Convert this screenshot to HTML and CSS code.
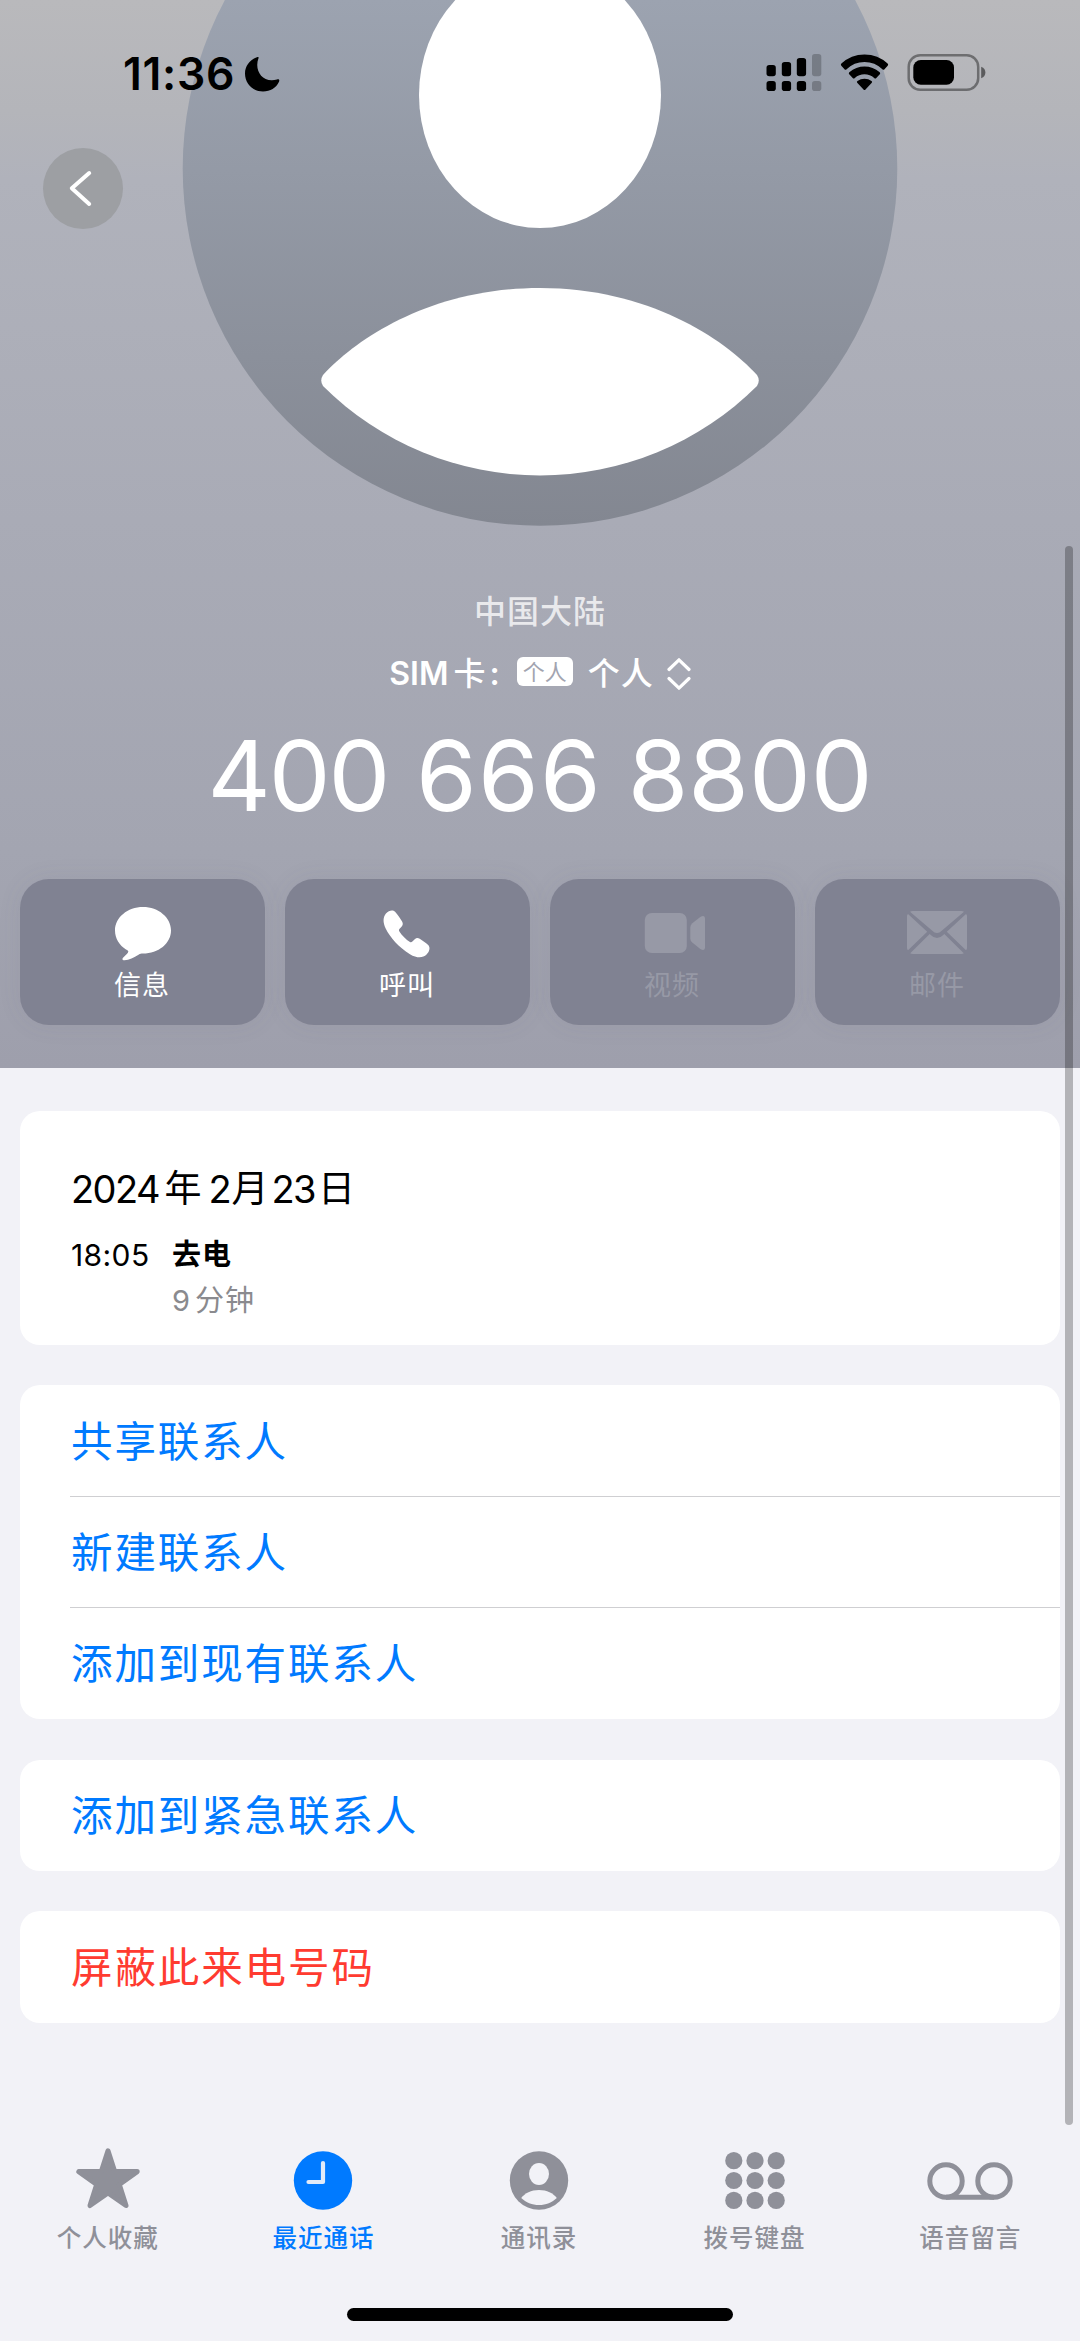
FILE: index.html
```html
<!DOCTYPE html>
<html lang="zh-CN">
<head>
<meta charset="utf-8">
<title>最近通话</title>
<link rel="stylesheet" href="styles.css">
</head>
<body>
<div class="screen">
  <header class="hero">
    <svg class="avatar" viewBox="0 0 1080 526">
      <defs>
        <linearGradient id="disc" gradientUnits="userSpaceOnUse" x1="0" y1="0" x2="0" y2="526">
          <stop offset="0" stop-color="#9ca3b0"/>
          <stop offset="1" stop-color="#838791"/>
        </linearGradient>
      </defs>
      <circle cx="540" cy="168.500" r="357.300" fill="url(#disc)"/>
      <ellipse cx="540" cy="95" rx="121" ry="133" fill="#fff"/>
      <path d="M323 375C357 338 432 288 540 288S723 338 757 375Q760.500 380.500 757 386A308 308 0 0 1 323 386Q319.500 380.500 323 375Z" fill="#fff"/>
    </svg>

    <div class="status">
      <div class="clock">
        <span class="time">11:36</span>
        <svg class="moon" viewBox="0 0 36 36"><path d="M13.500 1C14.500 .7 15 1.300 14.500 2.300C10 14 18 27.500 33 23.500C35 23 35.800 24 35 25.800C32 32 26.500 35.500 19 35.500C9 35.500 1 28 1 17.500C1 10 6 3.500 13.500 1Z"/></svg>
      </div>
      <svg class="indicators" viewBox="766 50 222 44">
        <g>
          <rect x="766.500" y="65" width="9.300" height="11.300" rx="2.800"/>
          <rect x="781.800" y="62" width="9.300" height="14.300" rx="2.800"/>
          <rect x="796.800" y="58" width="9.300" height="18.300" rx="2.800"/>
          <rect x="766.500" y="81" width="9.300" height="10" rx="2.800"/>
          <rect x="781.800" y="81" width="9.300" height="10" rx="2.800"/>
          <rect x="796.800" y="81" width="9.300" height="10" rx="2.800"/>
          <g opacity=".22">
            <rect x="812" y="54" width="9.300" height="22.300" rx="2.800"/>
            <rect x="812" y="81" width="9.300" height="10" rx="2.800"/>
          </g>
        </g>
        <g>
          <path d="M841.300 65.800Q840.300 64.700 841.400 63.600Q851 54.500 864.500 54.500T887.600 63.600Q888.700 64.700 887.700 65.800L884.500 69.300Q883.500 70.300 882.400 69.300Q875 62 864.500 62T846.600 69.300Q845.500 70.300 844.500 69.300Z"/>
          <path d="M849.200 74.300Q848.300 73.300 849.300 72.300Q856 66.500 864.500 66.500T879.700 72.300Q880.700 73.300 879.800 74.300L876.300 78Q875.300 79 874.200 78Q870 74.300 864.500 74.300T854.800 78Q853.700 79 852.700 78Z"/>
          <path d="M857.200 82.700Q856.400 81.800 857.500 81Q860.500 78.700 864.500 78.700T871.500 81Q872.600 81.800 871.800 82.700L865.500 89.500Q864.500 90.500 863.500 89.500Z"/>
        </g>
        <rect x="908.700" y="55.200" width="69.500" height="34.600" rx="11.500" fill="none" stroke="#000" stroke-opacity=".4" stroke-width="2.500"/>
        <rect x="913.300" y="60" width="40.700" height="24.800" rx="7.500"/>
        <path d="M981.200 66.700Q985.400 68.500 985.400 72.500T981.200 78.300Z" opacity=".5"/>
      </svg>
    </div>

    <button class="back" aria-label="返回">
      <svg viewBox="0 0 80 80"><path d="M46.200 24L28.800 39.300L46.200 55"/></svg>
    </button>

    <div class="region">中国大陆</div>
    <div class="sim">
      <span class="sim-label"><span class="latin">SIM</span>卡<span class="colon">:</span></span>
      <span class="badge">个人</span>
      <span class="sim-name">个人</span>
      <svg class="updown" viewBox="0 0 24 34"><path d="M2 12.500L12 2.800L22 12.500M2 21.500L12 31.200L22 21.500"/></svg>
    </div>
    <h1 class="number"><span class="area">400</span> <span class="mid">666</span> <span class="tail">8800</span></h1>

    <div class="actions">
      <button class="action">
        <svg viewBox="0 0 70 56"><path d="M35 3C50.500 3 63 13.500 63 26.500S50.500 49.500 35 49.500C33 49.500 32.300 49.600 30.500 50.700C26 53.500 21 56 16.500 56.200C14 56.300 14 54.600 15.500 53.200C18 50.800 20.300 49 20.300 47.500C20.300 46.700 19.500 46.400 18 45.500C11.500 41.500 7 34.500 7 26.500C7 13.500 19.500 3 35 3Z"/></svg>
        <span>信息</span>
      </button>
      <button class="action">
        <svg viewBox="0 0 70 56"><path transform="translate(0 0) scale(.96 1)" d="M13.500 9.500C16.500 6.300 20.700 5.500 23 7.800C26 11.200 28.500 14.500 30.300 17.500C31.500 19.700 31.200 21.200 29.700 22.800L27.500 25C26.900 25.700 26.900 26.500 27.500 27.500C30 31.500 34.500 35.600 38.500 38C39.500 38.500 40.300 38.300 41 37.600L43.500 35.200C45.200 33.700 46.700 33.600 48.700 34.800C51.700 36.500 54.800 38.800 57.500 41C60 43.500 58.800 47.600 55.800 50.500C52 54 46 54.500 38.500 50.200C27 43.500 17.800 33.500 13.200 24.500C10.200 18.500 10.300 13 13.500 9.500Z"/></svg>
        <span>呼叫</span>
      </button>
      <button class="action off">
        <svg viewBox="0 0 70 56"><rect x="6.800" y="9" width="42" height="40" rx="7"/><path d="M52.300 23.500Q52.300 21 54.300 19.300L62.300 13Q67 10.500 67 15V43.500Q67 47.500 62.300 45L54.300 38.500Q52.300 36.700 52.300 34.500Z"/></svg>
        <span>视频</span>
      </button>
      <button class="action off">
        <svg viewBox="1 0 70 56"><path d="M8 7.700Q9 7 11 7H59Q61 7 62 7.700L40 26.500Q35 31.500 30 26.500ZM5 14.500V12Q5 11 6 10L25.200 27.700L6 46.200Q5 45.500 5 44ZM65 14.500V12Q65 11 64 10L44.800 27.700L64 46.200Q65 45.500 65 44ZM8.200 49.200L27.700 30L29 31.200Q35 37 41 31.200L42.300 30L61.800 49.200Q61 50 59 50H11Q9 50 8.200 49.200Z"/></svg>
        <span>邮件</span>
      </button>
    </div>
  </header>

  <main class="content">
    <section class="card log">
      <h2 class="date"><span class="num">2024</span><span class="y">年</span><span class="num m">2</span><span class="mo">月</span><span class="num">23</span><span class="d">日</span></h2>
      <div class="call">
        <span class="call-time">18:05</span>
        <div class="call-info">
          <div class="call-type">去电</div>
          <div class="call-length"><span class="nine">9</span>分钟</div>
        </div>
      </div>
    </section>
    <section class="card">
      <a class="row">共享联系人</a>
      <a class="row">新建联系人</a>
      <a class="row">添加到现有联系人</a>
    </section>
    <section class="card"><a class="row">添加到紧急联系人</a></section>
    <section class="card"><a class="row danger">屏蔽此来电号码</a></section>
  </main>

  <nav class="tabs">
    <a class="tab">
      <svg viewBox="0 0 90 66"><path d="M45 5.800L51.700 26.600H74.200L56.300 39.500L63 60.500L45 48L27 60.500L33.700 39.500L15.800 26.600H38.300Z" stroke="currentColor" stroke-width="5" stroke-linejoin="round"/></svg>
      <span>个人收藏</span>
    </a>
    <a class="tab active">
      <svg viewBox="0 0 90 66"><circle cx="45" cy="35.500" r="29.200"/><path d="M45 18V37H30.500" fill="none" stroke="#f2f2f7" stroke-opacity=".93" stroke-width="4.200" stroke-linecap="round" stroke-linejoin="round"/></svg>
      <span>最近通话</span>
    </a>
    <a class="tab">
      <svg viewBox="0 0 90 66"><circle cx="45" cy="35.500" r="29.200"/><ellipse cx="45" cy="29" rx="10" ry="11" fill="#f2f2f7"/><path d="M27.200 53C31 48 37 45 45 45S59 48 62.800 53C58 57.500 52 60 45 60S32 57.500 27.200 53Z" fill="#f2f2f7"/></svg>
      <span>通讯录</span>
    </a>
    <a class="tab">
      <svg viewBox="0 0 90 66"><g><circle cx="23.800" cy="15.700" r="8.600"/><circle cx="45" cy="15.700" r="8.600"/><circle cx="66.200" cy="15.700" r="8.600"/><circle cx="23.800" cy="35.500" r="8.600"/><circle cx="45" cy="35.500" r="8.600"/><circle cx="66.200" cy="35.500" r="8.600"/><circle cx="23.800" cy="55.400" r="8.600"/><circle cx="45" cy="55.400" r="8.600"/><circle cx="66.200" cy="55.400" r="8.600"/></g></svg>
      <span>拨号键盘</span>
    </a>
    <a class="tab">
      <svg viewBox="0 0 90 66"><g fill="none" stroke="currentColor" stroke-width="5"><circle cx="21" cy="36" r="16.200"/><circle cx="69" cy="36" r="16.200"/><path d="M21 52.200H69"/></g></svg>
      <span>语音留言</span>
    </a>
  </nav>
  <div class="home"></div>
  <div class="scrollbar"></div>
</div>
</body>
</html>
```
FILE: styles.css
```css
* { box-sizing: border-box; }

body {
  margin: 0;
  font-family: Inter, "Noto Sans CJK SC", sans-serif;
  background: #f2f2f7;
}

button {
  border: 0;
  padding: 0;
  font: inherit;
  color: inherit;
}

svg { display: block; }

.screen {
  position: relative;
  display: flex;
  flex-direction: column;
  width: 1080px;
  height: 2341px;
  overflow: hidden;
  background: #f2f2f7;
}

/* Contact poster */
.hero {
  position: relative;
  display: flex;
  flex-direction: column;
  align-items: center;
  height: 1068px;
  color: #fff;
  background: linear-gradient(#b9b9bc 0, #b4b5ba 110px, #b0b2bb 180px, #a9abb6 520px, #a3a5b1 850px, #9e9fac 1068px);
}

.avatar { width: 1080px; height: 526px; flex: none; }

.status {
  position: absolute;
  top: 50px;
  left: 0;
  right: 0;
  display: flex;
  justify-content: space-between;
  align-items: center;
  height: 48px;
  padding: 0 92px 0 123px;
  color: #000;
}

.clock { display: flex; align-items: center; gap: 9px; }
.time { font-size: 44.500px; font-weight: 600; line-height: 48px; letter-spacing: .700px; }
.moon { width: 36px; height: 36px; }
.indicators { width: 222px; height: 44px; margin-bottom: 4px; }

.back {
  position: absolute;
  top: 148px;
  left: 43px;
  width: 80px;
  height: 81px;
  border-radius: 50%;
  background: #9d9fa3;
}

.back path {
  fill: none;
  stroke: #fff;
  stroke-width: 4;
  stroke-linecap: round;
  stroke-linejoin: round;
}

.region {
  margin-top: 62px;
  font-size: 32px;
  line-height: 48px;
  font-weight: 500;
  letter-spacing: 1px;
  color: rgba(255, 255, 255, .75);
}

.sim {
  display: flex;
  align-items: center;
  height: 48px;
  margin-top: 14px;
  font-size: 32px;
  line-height: 48px;
  font-weight: 500;
}

.latin { font-weight: 600; letter-spacing: 0; margin-right: 5px; }
.colon { margin-left: 4px; font-weight: 600; }

.badge {
  width: 56px;
  height: 29px;
  margin: -5px 15px 0 17px;
  border-radius: 6px;
  background: #fff;
  color: #a2a4b0;
  font-size: 22px;
  font-weight: 400;
  line-height: 31px;
  text-align: center;
}

.sim-name { letter-spacing: 1px; }
.updown { width: 24px; height: 34px; margin-left: 13px; }
.updown path { fill: none; stroke: #fff; stroke-width: 3.200; stroke-linecap: round; stroke-linejoin: round; }

.number {
  margin: 16px 0 0;
  font-size: 98px;
  line-height: 124px;
  font-weight: 400;
  letter-spacing: -2px;
  word-spacing: 2px;
  white-space: nowrap;
}

.mid { letter-spacing: 1.300px; margin-right: -2px; }
.tail { letter-spacing: 0; }

.actions {
  display: grid;
  grid-template-columns: repeat(4, 245px);
  gap: 20px;
  position: relative;
  margin-top: auto;
  margin-bottom: 43px;
}

.action {
  display: flex;
  flex-direction: column;
  align-items: center;
  height: 146px;
  padding-top: 25px;
  border-radius: 29px;
  background: #808292;
  box-shadow: 0 0 24px rgba(90, 92, 110, .08);
  font-size: 27px;
  line-height: 40px;
  letter-spacing: 1px;
}

.action svg { width: 70px; height: 56px; fill: currentColor; overflow: visible; }
.action span { margin: 6px 1px 0 0; }
.action.off { color: #9799a6; }

/* Grouped list */
.content {
  display: flex;
  flex-direction: column;
  gap: 40.400px;
  padding: 43px 20px 0;
}

.card { border-radius: 20px; background: #fff; }

.log { height: 234px; padding: 50px 51px 0; }

.date {
  display: flex;
  margin: 0;
  font-size: 37px;
  line-height: 56px;
  font-weight: 400;
}

.num { font-size: 38px; letter-spacing: -1.600px; }
.y { margin-left: 5.500px; }
.m { margin-left: 7px; }
.mo { margin: 0 3px 0 1.500px; }
.d { margin-left: 3px; }

.call { display: flex; margin-top: 16px; font-size: 30px; }
.call-time { width: 101px; line-height: 44px; letter-spacing: .4px; }
.call-type { line-height: 44px; font-size: 29px; font-weight: 700; letter-spacing: 1px; }
.call-length { line-height: 44px; margin-top: 2px; color: #8a8a8e; font-size: 29px; letter-spacing: 1px; }
.nine { margin-right: 4px; }

.row {
  display: flex;
  align-items: center;
  height: 111.300px;
  padding: 0 0 5px 51px;
  color: #007aff;
  font-size: 41.500px;
  letter-spacing: 1.900px;
}

.row:not(:last-child) {
  background: linear-gradient(#cfcfd2, #cfcfd2) 50px 100% / 100% 1px no-repeat;
}

.row.danger { color: #ff3b30; }

/* Tab bar */
.tabs {
  display: grid;
  grid-template-columns: repeat(5, 1fr);
  margin-top: 122px;
  padding-right: 2px;
  color: #8f9099;
}

.tab {
  display: flex;
  flex-direction: column;
  align-items: center;
  font-size: 24.500px;
  line-height: 36px;
  font-weight: 500;
  letter-spacing: 1px;
}

.tab svg { width: 90px; height: 66px; fill: currentColor; }
.tab span { margin-top: 9px; }
.tab.active { color: #007aff; }

.home {
  width: 386px;
  height: 13px;
  margin: auto auto 20px;
  border-radius: 7px;
  background: #000;
}

.scrollbar {
  position: absolute;
  top: 546px;
  right: 7.500px;
  width: 7.500px;
  height: 1579px;
  border-radius: 4px;
  background: rgba(0, 0, 0, .26);
}
```
